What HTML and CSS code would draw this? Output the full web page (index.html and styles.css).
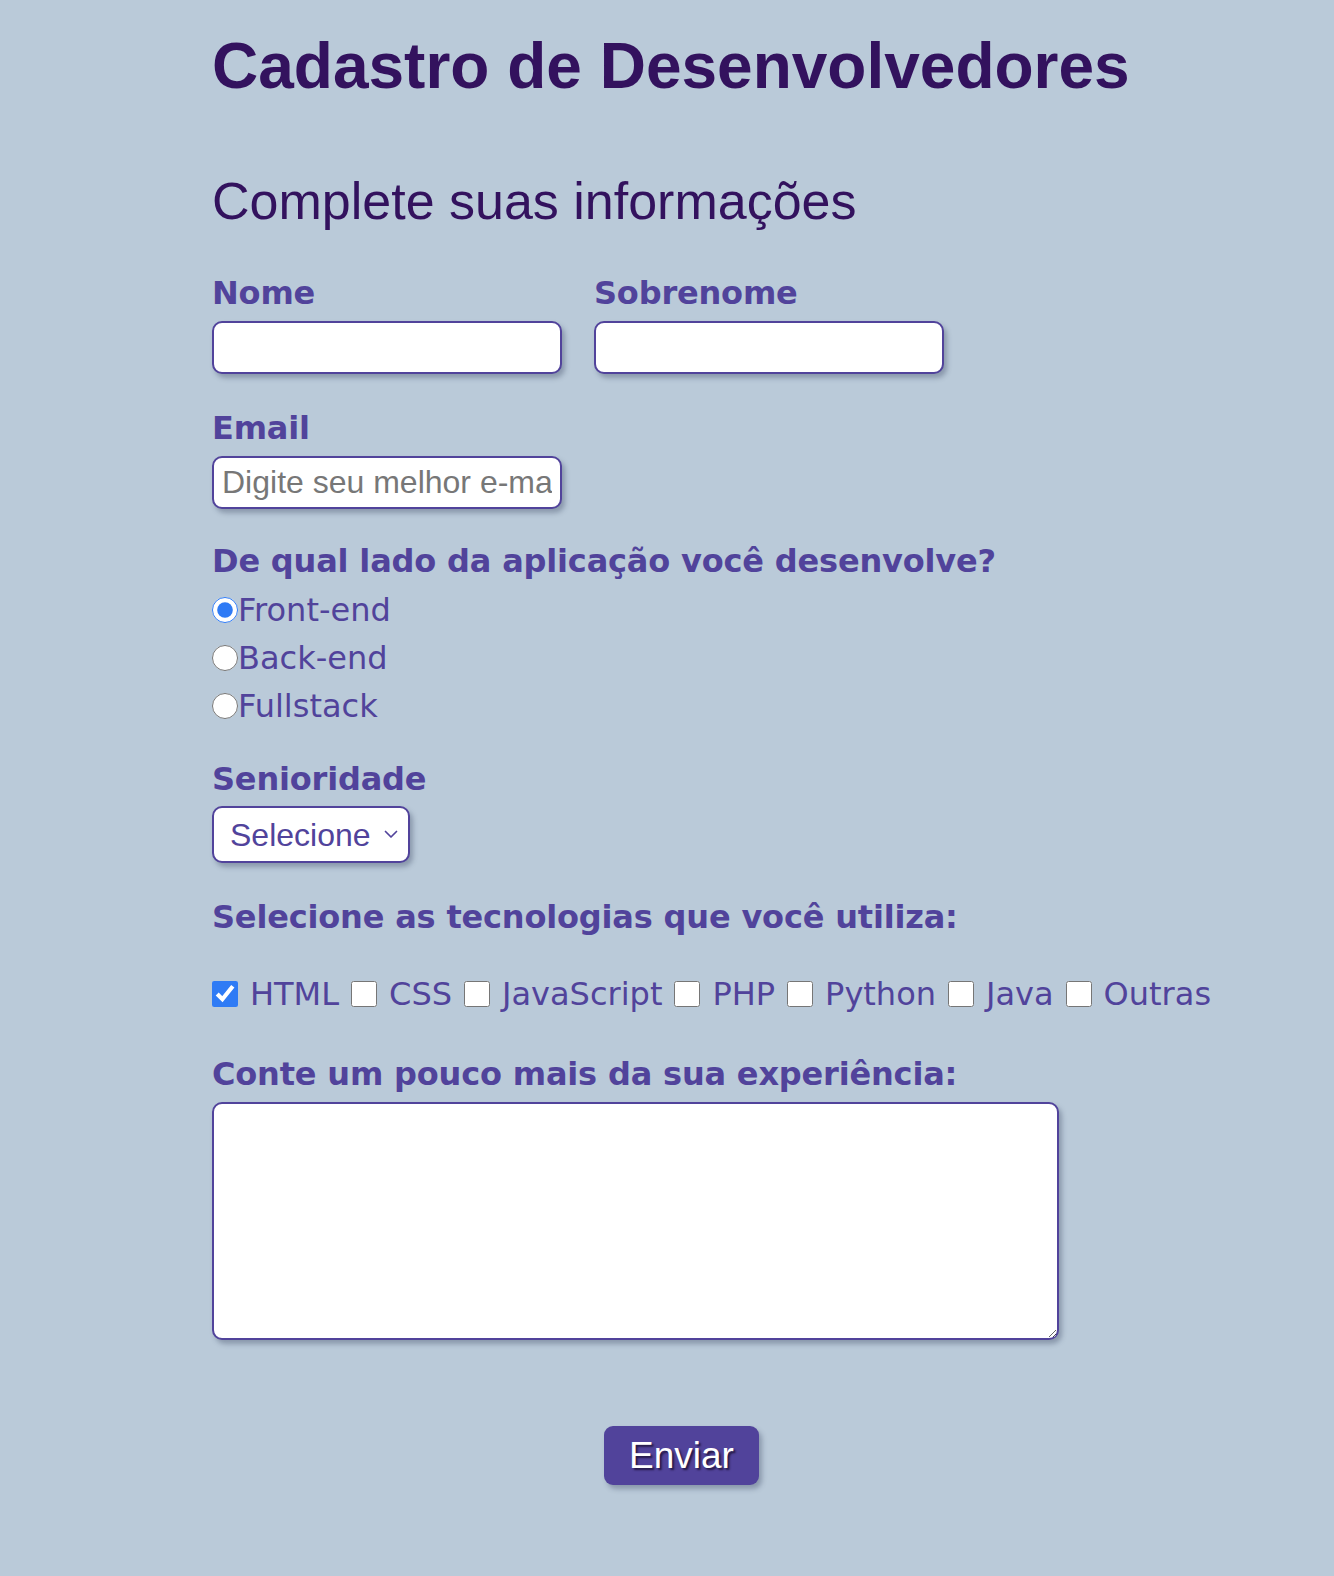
FILE: index.html
```html
<!DOCTYPE html>
<html lang="pt-BR">
<head>
<meta charset="utf-8">
<title>Cadastro de Desenvolvedores</title>
<link rel="stylesheet" href="styles.css">
</head>
<body>
<main class="page">
  <h1 class="title">Cadastro de Desenvolvedores</h1>
  <form class="form">
    <h2 class="subtitle">Complete suas informações</h2>

    <div class="names">
      <div class="field">
        <label class="label label-tight" for="nome">Nome</label>
        <input class="text-input" id="nome" type="text">
      </div>
      <div class="field">
        <label class="label label-tight" for="sobrenome">Sobrenome</label>
        <input class="text-input" id="sobrenome" type="text">
      </div>
    </div>

    <div class="field email">
      <label class="label label-email" for="email">Email</label>
      <input class="text-input" id="email" type="email" placeholder="Digite seu melhor e-mail">
    </div>

    <div class="question">
      <p class="label label-question">De qual lado da aplicação você desenvolve?</p>
      <label class="radio-row"><input class="radio" type="radio" name="lado" checked>Front-end</label>
      <label class="radio-row"><input class="radio" type="radio" name="lado">Back-end</label>
      <label class="radio-row"><input class="radio" type="radio" name="lado">Fullstack</label>
    </div>

    <div class="seniority">
      <label class="label label-select" for="senioridade">Senioridade</label>
      <span class="select-wrap">
        <select class="select" id="senioridade">
          <option>Selecione</option>
          <option>Júnior</option>
          <option>Pleno</option>
          <option>Sênior</option>
        </select>
        <svg class="chevron" width="14" height="9" viewBox="0 0 14 9" aria-hidden="true"><path d="M1.5 1.5 L7 7 L12.5 1.5" fill="none" stroke="#51439b" stroke-width="1.7" stroke-linecap="round" stroke-linejoin="round"/></svg>
      </span>
    </div>

    <div class="techs">
      <p class="label">Selecione as tecnologias que você utiliza:</p>
      <div class="checks">
        <label class="check"><input class="checkbox" type="checkbox" checked><span>HTML</span></label>
        <label class="check"><input class="checkbox" type="checkbox"><span>CSS</span></label>
        <label class="check"><input class="checkbox" type="checkbox"><span>JavaScript</span></label>
        <label class="check"><input class="checkbox" type="checkbox"><span>PHP</span></label>
        <label class="check"><input class="checkbox" type="checkbox"><span>Python</span></label>
        <label class="check"><input class="checkbox" type="checkbox"><span>Java</span></label>
        <label class="check"><input class="checkbox" type="checkbox"><span>Outras</span></label>
      </div>
    </div>

    <div class="experience">
      <label class="label label-exp" for="exp">Conte um pouco mais da sua experiência:</label>
      <textarea class="textarea" id="exp"></textarea>
    </div>

    <div class="actions">
      <button class="button" type="button">Enviar</button>
    </div>
  </form>
</main>
</body>
</html>
```

FILE: styles.css
```css
html, body {
  margin: 0;
  padding: 0;
}

body {
  background: #bacad9;
  color: #51439b;
  font-family: "DejaVu Sans", Verdana, sans-serif;
}

.page {
  margin-left: 212px;
  width: 939px;
  padding-top: 29px;
  padding-bottom: 91px;
}

.title {
  margin: 0;
  font: 700 64px/74px "Liberation Sans", Arial, sans-serif;
  color: #33125e;
}

.subtitle {
  margin: 68px 0 0;
  font: 400 52px/60px "Liberation Sans", Arial, sans-serif;
  color: #33125e;
}

.label {
  display: block;
  margin: 0;
  font: 700 32px/40px "DejaVu Sans", Verdana, sans-serif;
  letter-spacing: -0.18px;
  color: #51439b;
}

.label-tight { margin-bottom: 8px; }
.label-email { margin-bottom: 8px; }
.label-question { margin-bottom: 5px; }
.label-select { margin-bottom: 7px; }
.label-exp { margin-bottom: 8px; }

.names {
  display: flex;
  gap: 32px;
  margin-top: 42px;
}

.email { margin-top: 34px; }

.text-input {
  display: block;
  box-sizing: border-box;
  width: 350px;
  height: 53px;
  padding: 0 8px;
  border: 2px solid #51439b;
  border-radius: 10px;
  background: #fff;
  box-shadow: 3px 4px 5px rgba(50, 60, 90, 0.35);
  font: 32px "Liberation Sans", Arial, sans-serif;
  color: #333;
  outline: none;
}

.text-input::placeholder {
  color: #777;
}

.question { margin-top: 32px; }

.radio-row {
  display: flex;
  align-items: center;
  height: 48px;
  font: 400 32px/48px "DejaVu Sans", Verdana, sans-serif;
  color: #51439b;
}

.radio {
  width: 26px;
  height: 26px;
  margin: 0;
  accent-color: #2f7bf5;
}

.seniority { margin-top: 29px; }

.select-wrap {
  position: relative;
  display: inline-block;
}

.select {
  display: block;
  box-sizing: border-box;
  width: 198px;
  height: 57px;
  padding: 0 0 0 16px;
  border: 2px solid #51439b;
  border-radius: 10px;
  background: #fff;
  box-shadow: 3px 4px 5px rgba(50, 60, 90, 0.35);
  font: 32px "Liberation Sans", Arial, sans-serif;
  color: #51439b;
  appearance: none;
  -webkit-appearance: none;
  outline: none;
}

.chevron {
  position: absolute;
  left: 172px;
  top: 24px;
  pointer-events: none;
}

.techs { margin-top: 34px; }

.checks {
  display: flex;
  align-items: center;
  gap: 12px;
  height: 48px;
  margin-top: 33px;
  font: 400 32px/48px "DejaVu Sans", Verdana, sans-serif;
  color: #51439b;
}

.check {
  display: flex;
  align-items: center;
  gap: 12px;
}

.checkbox {
  width: 26px;
  height: 26px;
  margin: 0;
  accent-color: #2f7bf5;
}

.experience { margin-top: 36px; }

.textarea {
  display: block;
  box-sizing: border-box;
  width: 847px;
  height: 238px;
  border: 2px solid #51439b;
  border-radius: 10px;
  background: #fff;
  box-shadow: 3px 4px 5px rgba(50, 60, 90, 0.35);
  outline: none;
  font: 32px "Liberation Sans", Arial, sans-serif;
}

.actions {
  display: flex;
  justify-content: center;
  margin-top: 86px;
}

.button {
  box-sizing: border-box;
  width: 155px;
  height: 59px;
  padding: 0;
  border: none;
  border-radius: 9px;
  background: #51439b;
  color: #fff;
  font: 400 37px/59px "Liberation Sans", Arial, sans-serif;
  text-shadow: 2px 2px 2px rgba(20, 10, 40, 0.75);
  box-shadow: 3px 4px 5px rgba(50, 60, 90, 0.35);
  cursor: pointer;
}
```
